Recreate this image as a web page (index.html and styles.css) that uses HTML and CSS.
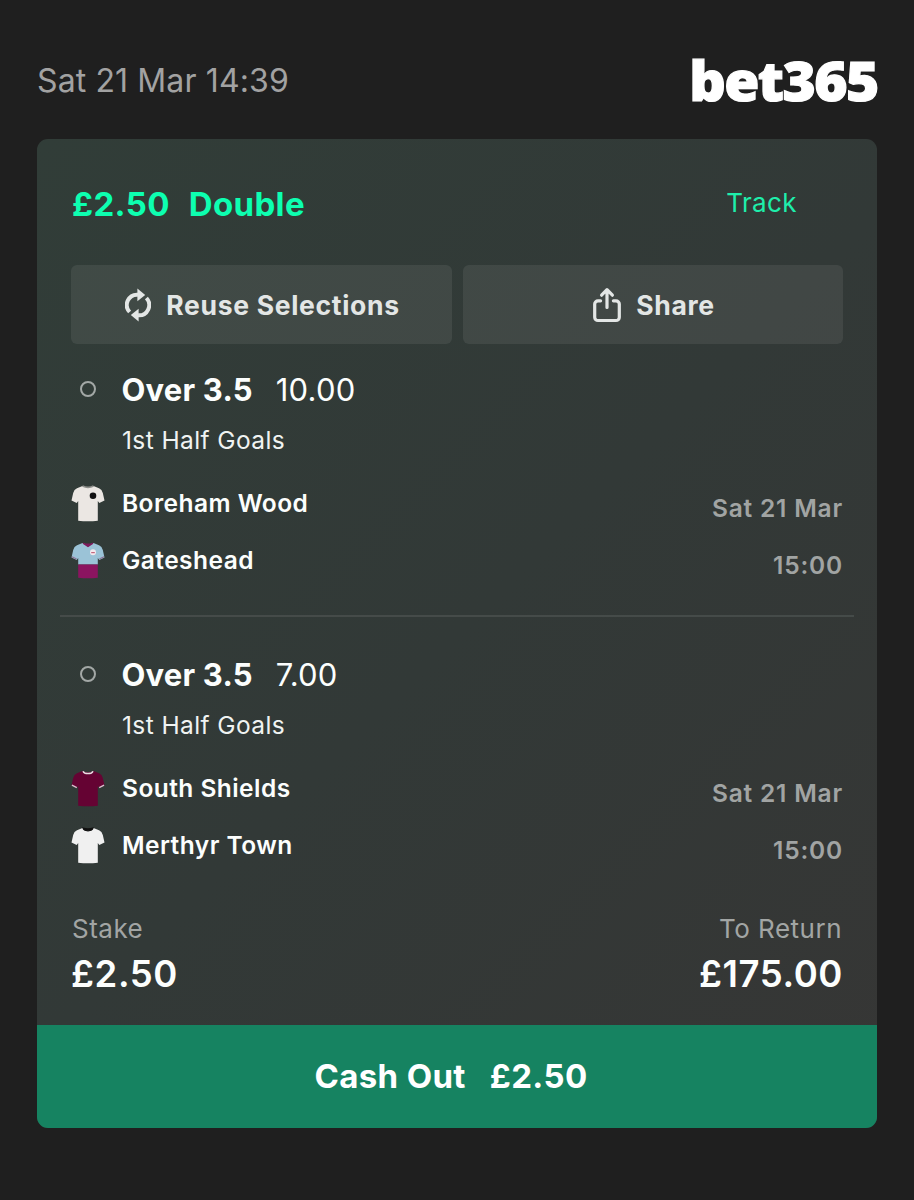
FILE: index.html
```html
<!DOCTYPE html>
<html lang="en">
<head>
	<meta charset="UTF-8">
	<meta name="viewport" content="width=device-width, initial-scale=1" />
	<title>bet365</title>

	<link rel="stylesheet" href="styles.css">
</head>
<body>

	<header>
		<span class="date">Sat 21 Mar 14:39</span>
		<span class="logo">bet365</span>
	</header>

	<div class="slip">
		<div class="slip-head">
			<h1><span class="amount">£2.50</span><span class="type">Double</span></h1>
			<a class="track">Track</a>
		</div>

		<div class="buttons">
			<button class="reuse">
				<svg width="26" height="34" viewBox="0 0 26 34">
					<path d="M4.6 24A10.3 10.3 0 0 1 13 6.7" fill="none" stroke="#e3e6e5" stroke-width="4"/>
					<path d="M12.4 .4L20.2 7 12.4 13.2z" fill="#e3e6e5"/>
					<path d="M21.4 10A10.3 10.3 0 0 1 13 27.3" fill="none" stroke="#e3e6e5" stroke-width="4"/>
					<path d="M13.6 33.6L5.8 27 13.6 20.8z" fill="#e3e6e5"/>
				</svg>
				<span>Reuse Selections</span>
			</button>
			<button class="share">
				<svg width="28" height="36" viewBox="0 0 28 36" fill="none" stroke="#e3e6e5" stroke-width="3.2" stroke-linecap="round" stroke-linejoin="round">
					<path d="M7.6 13.8H5a3.3 3.3 0 0 0-3.3 3.3v13.1A3.3 3.3 0 0 0 5 33.5h18a3.3 3.3 0 0 0 3.3-3.3V17.1a3.3 3.3 0 0 0-3.3-3.3h-2.6"/>
					<path d="M14 20.4V3M8.6 8.2L14 2.6l5.4 5.6"/>
				</svg>
				<span>Share</span>
			</button>
		</div>

		<div class="selection">
			<div class="pick">
				<span class="dot"></span>
				<strong>Over 3.5</strong>
				<span class="odds">10.00</span>
			</div>
			<div class="market">1st Half Goals</div>
			<div class="fixture">
				<div class="teams">
					<div class="team">
						<svg class="kit" viewBox="0 0 34 37">
							<path d="M11.5 1Q17 3.6 22.5 1L28 3.2Q31 4.5 31.8 8L33.5 15.5 28.3 18 26.8 16V35.8Q17 36.8 7.2 35.8V16L5.7 18 .5 15.5 2.2 8Q3 4.5 6 3.2z" fill="#ebe7e3"/>
							<path d="M11.5 1Q17 3.8 22.5 1" fill="none" stroke="#8d8e8a" stroke-width="1.6"/>
							<circle cx="22" cy="10.8" r="3.3" fill="#111"/>
						</svg>
						<span>Boreham Wood</span>
					</div>
					<div class="team">
						<svg class="kit" viewBox="0 0 34 37">
							<path d="M11.5 1Q17 3.6 22.5 1L28 3.2Q31 4.5 31.8 8L33.5 15.5 28.3 18 26.8 16V22.5H7.2V16L5.7 18 .5 15.5 2.2 8Q3 4.5 6 3.2z" fill="#9bc3d7"/>
							<path d="M7.2 22.5H26.8V35.8Q17 36.8 7.2 35.8z" fill="#8b1460"/>
							<path d="M1 14.8L5.6 17M33 14.8L28.4 17" stroke="#8f7396" stroke-width="1.2"/>
							<path d="M12 1.2L17 4.6 22 1.2Q17 3 12 1.2z" fill="#7d1b5c" stroke="#7d1b5c" stroke-width="1.2"/>
							<circle cx="22" cy="10.3" r="3" fill="#f3e9ee"/>
							<path d="M20.2 10.6h3.6" stroke="#c3667e" stroke-width="1.2"/>
						</svg>
						<span>Gateshead</span>
					</div>
				</div>
				<div class="start">
					<div>Sat 21 Mar</div>
					<div>15:00</div>
				</div>
			</div>
		</div>

		<hr>

		<div class="selection second">
			<div class="pick">
				<span class="dot"></span>
				<strong>Over 3.5</strong>
				<span class="odds">7.00</span>
			</div>
			<div class="market">1st Half Goals</div>
			<div class="fixture">
				<div class="teams">
					<div class="team">
						<svg class="kit" viewBox="0 0 34 37">
							<path d="M11.5 1Q17 3.6 22.5 1L28 3.2Q31 4.5 31.8 8L33.5 15.5 28.3 18 26.8 16V35.8Q17 36.8 7.2 35.8V16L5.7 18 .5 15.5 2.2 8Q3 4.5 6 3.2z" fill="#650333"/>
							<path d="M.9 15.2L5.8 17.6M33.1 15.2L28.2 17.6" stroke="#d9c3cf" stroke-width="1.3"/>
							<path d="M12 1.2Q13 3.6 17 3.6 21 3.6 22 1.2" fill="none" stroke="#e9dfe4" stroke-width="1.5"/>
						</svg>
						<span>South Shields</span>
					</div>
					<div class="team">
						<svg class="kit" viewBox="0 0 34 37">
							<path d="M11.5 1Q17 3.6 22.5 1L28 3.2Q31 4.5 31.8 8L33.5 15.5 28.3 18 26.8 16V35.8Q17 36.8 7.2 35.8V16L5.7 18 .5 15.5 2.2 8Q3 4.5 6 3.2z" fill="#f0f0f0"/>
							<path d="M12 1.2Q12.6 3.8 17 3.8 21.4 3.8 22 1.2 17 2.6 12 1.2z" fill="#111" stroke="#111" stroke-width="1.2"/>
						</svg>
						<span>Merthyr Town</span>
					</div>
				</div>
				<div class="start">
					<div>Sat 21 Mar</div>
					<div>15:00</div>
				</div>
			</div>
		</div>

		<div class="totals">
			<div class="stake">
				<div class="label">Stake</div>
				<div class="value">£2.50</div>
			</div>
			<div class="return">
				<div class="label">To Return</div>
				<div class="value">£175.00</div>
			</div>
		</div>

		<button class="cash-out"><span>Cash Out</span><span>£2.50</span></button>
	</div>

</body>
</html>
```
FILE: styles.css
```css
body{
	background-color: #1f1f1f;
	font-family: Inter, sans-serif;
	color: #fcfefd;
	margin: 0;
	padding: 0 37px;
}

header{
	height: 139px;
	padding-top: 22px;
	box-sizing: border-box;
	display: flex;
	align-items: center;
	justify-content: space-between;
}

.date{
	font-size: 32px;
	letter-spacing: 0.12px;
	color: #a2a2a2;
}

.logo{
	font-family: "Noto Sans", "Open Sans", sans-serif;
	font-weight: 900;
	font-size: 54px;
	line-height: 60px;
	letter-spacing: -1.5px;
	margin: -2px -1px 0 0;
	color: white;
	-webkit-text-stroke: 1.2px white;
	transform: scaleX(1.055);
	transform-origin: right;
}

.slip{
	border-radius: 11px;
	overflow: hidden;
	background: linear-gradient(135deg, #313d38 0%, #323937 50%, #363635 100%);
}

.slip-head{
	height: 126px;
	box-sizing: border-box;
	padding: 4px 80px 0 35px;
	display: flex;
	align-items: center;
	justify-content: space-between;
}

h1{
	margin: 0;
	font-size: 33px;
	font-weight: 700;
	letter-spacing: 0.35px;
	color: #0dffb0;
}

h1 .type{
	margin-left: 19px;
}

.track{
	font-size: 26px;
	letter-spacing: 0.4px;
	color: #1eeeab;
	margin-top: -3px;
}

.buttons{
	display: grid;
	grid-template-columns: 381px 380px;
	gap: 11px;
	padding: 0 34px;
}

button{
	border: 0;
	padding: 0;
	font-family: inherit;
	display: flex;
	align-items: center;
	justify-content: center;
}

.buttons button{
	height: 79px;
	padding-left: 2px;
	border-radius: 6px;
	background-color: rgba(255, 255, 255, 0.075);
	color: #e3e6e5;
	font-size: 26.5px;
	font-weight: 700;
	letter-spacing: 0.7px;
	gap: 15px;
}

.selection{
	padding: 21px 35px 26px;
}

.selection.second{
	padding: 33px 35px 0;
}

.pick{
	display: flex;
	align-items: center;
	height: 48px;
	padding-bottom: 2px;
	font-size: 31px;
	letter-spacing: 0.2px;
}

.pick .dot{
	width: 16px;
	height: 16px;
	box-sizing: border-box;
	border: 2px solid #a3a8a6;
	border-radius: 50%;
	margin: -1px 25.5px 0 8px;
}

.pick strong{
	font-weight: 700;
}

.pick .odds{
	margin-left: 23px;
}

.market{
	line-height: 50px;
	font-size: 24.5px;
	letter-spacing: 0.4px;
	padding-left: 50px;
	color: #f0f3f2;
}

.fixture{
	display: flex;
	justify-content: space-between;
	padding-top: 10px;
	font-size: 24.5px;
	font-weight: 600;
	letter-spacing: 0.45px;
	line-height: 57px;
}

.team{
	height: 57px;
	display: flex;
	align-items: center;
}

.kit{
	width: 34px;
	height: 37px;
	margin-left: -1px;
	margin-right: 17px;
}

.start{
	color: #a1a4a3;
	text-align: right;
	letter-spacing: 0.8px;
	padding-top: 5px;
	margin-bottom: -5px;
	margin-right: -1px;
}

hr{
	height: 2px;
	border: 0;
	margin: 0 23px;
	background-color: #454b49;
}

.totals{
	display: flex;
	justify-content: space-between;
	padding: 36px 35px 25px;
}

.totals .label{
	font-size: 26px;
	letter-spacing: 0.5px;
	line-height: 38px;
	color: #a2a5a4;
}

.totals .value{
	font-size: 36.5px;
	letter-spacing: 0.6px;
	line-height: 52px;
	font-weight: 600;
}

.stake .value{
	margin-left: -1px;
}

.return .value{
	margin-right: -1px;
}

.return{
	text-align: right;
}

.cash-out{
	width: 100%;
	height: 103px;
	padding: 0 12px 2px 0;
	background-color: #168361;
	color: white;
	font-size: 33px;
	font-weight: 700;
	letter-spacing: 0.35px;
	gap: 24px;
}
```
